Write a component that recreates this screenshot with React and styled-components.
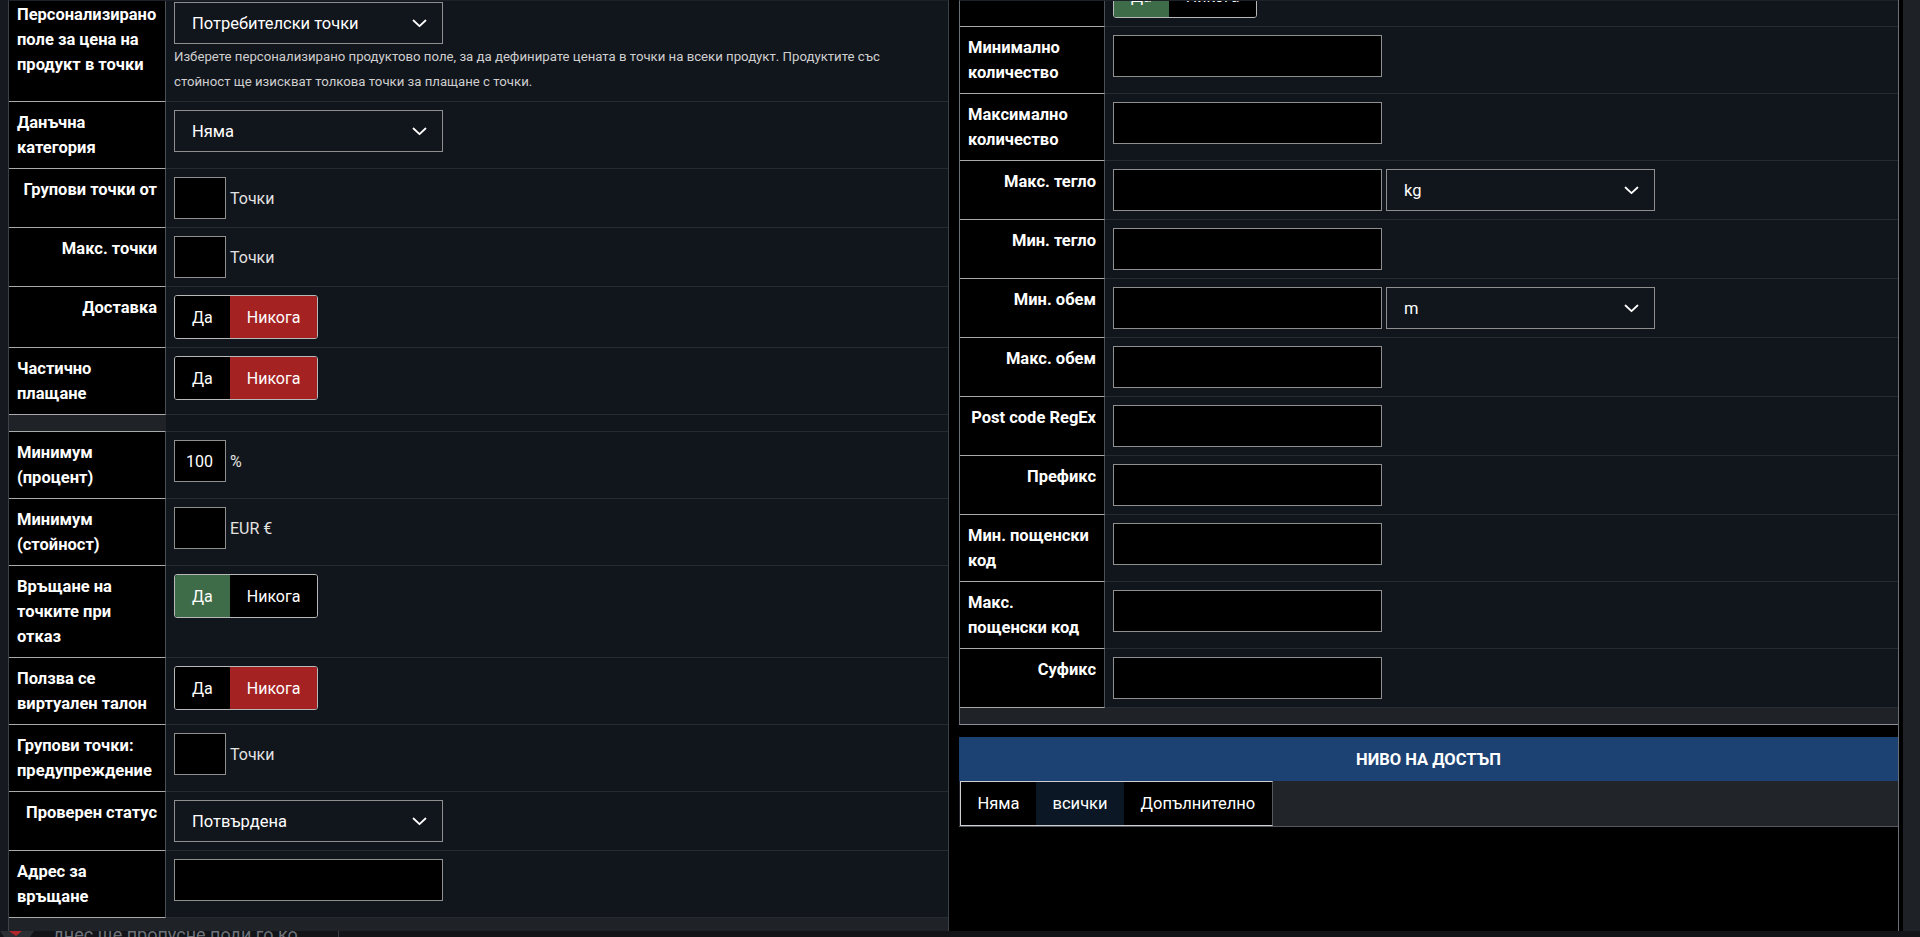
import React from "react";
import styled, { createGlobalStyle } from "styled-components";

const GlobalStyle = createGlobalStyle`
  html, body { margin: 0; padding: 0; background: #000; }
  body {
    font-family: Roboto, "Noto Sans", "Liberation Sans", sans-serif;
    color: #fff;
    overflow: hidden;
  }
  * { box-sizing: border-box; }
`;

const Page = styled.div`
  width: 1920px;
  height: 937px;
  display: flex;
  flex-direction: column;
  background: #000;
  overflow: hidden;
`;

const Workspace = styled.div`
  display: flex;
  height: 931px;
  flex-shrink: 0;
`;

const EdgeStrip = styled.div`
  width: 8px;
  flex-shrink: 0;
  background: #16191f;
`;

const LeftColumn = styled.div`
  width: 941px;
  flex-shrink: 0;
  border-left: 1px solid #3d4149;
  border-right: 1px solid #3d4149;
  border-top: 1px solid #1d2129;
  background: #1f2328;
  overflow: hidden;
`;

const RightColumn = styled.div`
  width: 940px;
  flex-shrink: 0;
  margin-left: 10px;
  display: flex;
  flex-direction: column;
  border-right: 1px solid #6a6e75;
`;

const FormBox = styled.div`
  border-left: 1px solid #6a6e75;
  border-top: 1px solid #1d2129;
  border-bottom: 1px solid #8a8e95;
  background: #1f2328;
  padding-bottom: 16px;
  overflow: hidden;
`;

const Scrollbar = styled.div`
  width: 17px;
  margin-left: 4px;
  flex-shrink: 0;
  background: #1e2125;
`;

const Row = styled.div`
  display: grid;
  grid-template-columns: ${(p) => p.$labelWidth}px 1fr;
  ${(p) =>
    p.$fixedHeight
      ? `height: ${p.$fixedHeight}px; grid-template-rows: ${p.$fixedHeight}px; overflow: hidden;`
      : ""}
`;

const Label = styled.div`
  background: ${(p) => (p.$blank ? "transparent" : "#000")};
  color: #fff;
  font-weight: 700;
  font-size: 16.5px;
  line-height: 25px;
  padding: ${(p) => (p.$tight ? "1px 8px 8px" : "8px")};
  text-align: ${(p) => p.$align || "left"};
  border-right: 1px solid ${(p) => (p.$blank ? "transparent" : "#4b4f57")};
  border-bottom: 1px solid #a9a9a9;
  min-height: ${(p) => (p.$spacer ? "17px" : "0")};
`;

const Field = styled.div`
  background: #11151c;
  padding: ${(p) => (p.$tight ? "1px 8px 7px" : "8px")};
  border-bottom: 1px solid #262a31;
  display: flex;
  flex-direction: column;
  justify-content: ${(p) => (p.$bottom ? "flex-end" : "flex-start")};
  align-items: flex-start;
  min-width: 0;
  min-height: 0;
`;

const Inline = styled.div`
  display: flex;
  align-items: center;
  gap: 4px;
`;

const TextInput = styled.input`
  width: ${(p) => (p.$small ? "52px" : "269px")};
  height: 42px;
  background: #000;
  border: 1px solid #8f8f8f;
  border-radius: 0;
  color: #fff;
  font-family: inherit;
  font-size: 16px;
  padding: 0 11px;
  outline: none;
`;

const Unit = styled.span`
  font-size: 16px;
  color: #e2e2e2;
`;

const SelectBox = styled.div`
  width: 269px;
  height: 42px;
  border: 1px solid #8f8f8f;
  background: #11151c;
  display: flex;
  align-items: center;
  justify-content: space-between;
  padding: 0 15px 0 17px;
  font-size: 16.5px;
  color: #fff;
`;

const HelpText = styled.div`
  max-width: 740px;
  font-size: 13.2px;
  line-height: 25px;
  color: #cfcfcf;
`;

const Toggle = styled.div`
  display: inline-flex;
  height: 44px;
  border: 1px solid #b8b8b8;
  border-radius: 3px;
  overflow: hidden;
  flex-shrink: 0;
`;

const toneColors = { red: "#a52222", green: "#3e6b48", off: "#000" };

const ToggleOption = styled.span`
  display: flex;
  align-items: center;
  padding: 0 17px;
  font-size: 16px;
  color: #fff;
  background: ${(p) => toneColors[p.$tone]};
`;

const AccessHeader = styled.div`
  margin-top: 12px;
  height: 44px;
  background: #1c4273;
  display: flex;
  align-items: center;
  justify-content: center;
  font-weight: 700;
  font-size: 16.5px;
  text-transform: uppercase;
  color: #fff;
`;

const TabBar = styled.div`
  height: 46px;
  background: #212429;
  border-bottom: 1px solid #53575e;
  display: flex;
  align-items: flex-start;
`;

const TabGroup = styled.div`
  display: flex;
  margin-left: 1px;
  border: 1px solid #cfcfcf;
  border-right-color: #55595f;
`;

const Tab = styled.div`
  height: 43px;
  display: flex;
  align-items: center;
  padding: 0 16.5px;
  font-size: 16.5px;
  color: #fff;
  background: ${(p) => (p.$active ? "#0b1724" : "#000")};
`;

const Footer = styled.div`
  height: 6px;
  display: flex;
  align-items: flex-start;
  background: #121418;
  overflow: hidden;
`;

const FooterMark = styled.svg`
  width: 40px;
  height: 6px;
  flex-shrink: 0;
`;

const FooterText = styled.span`
  margin-left: 13px;
  font-size: 18px;
  line-height: 8px;
  color: #6d7279;
  white-space: nowrap;
`;

const FooterDivider = styled.span`
  width: 1px;
  height: 6px;
  margin-left: 40px;
  background: #3a3d43;
`;

function Chevron() {
  return (
    <svg width="15" height="9" viewBox="0 0 15 9" fill="none">
      <polyline
        points="1.5,1.5 7.5,7.2 13.5,1.5"
        stroke="#fff"
        strokeWidth="1.8"
        strokeLinecap="round"
        strokeLinejoin="round"
      />
    </svg>
  );
}

function Select({ value }) {
  return (
    <SelectBox>
      <span>{value}</span>
      <Chevron />
    </SelectBox>
  );
}

function YesNo({ on }) {
  return (
    <Toggle>
      <ToggleOption $tone={on ? "green" : "off"}>Да</ToggleOption>
      <ToggleOption $tone={on ? "off" : "red"}>Никога</ToggleOption>
    </Toggle>
  );
}

function SmallWithUnit({ value, unit }) {
  return (
    <Inline>
      <TextInput $small defaultValue={value || ""} />
      <Unit>{unit}</Unit>
    </Inline>
  );
}

function FormRow({ labelWidth, label, align, tight, children }) {
  return (
    <Row $labelWidth={labelWidth}>
      <Label $align={align} $tight={tight}>
        {label}
      </Label>
      <Field $tight={tight}>{children}</Field>
    </Row>
  );
}

const LW = 157;
const RW = 145;

function PointsPanel() {
  return (
    <LeftColumn>
      <FormRow labelWidth={LW} tight label="Персонализирано поле за цена на продукт в точки">
        <Select value="Потребителски точки" />
        <HelpText>
          Изберете персонализирано продуктово поле, за да дефинирате цената в точки на всеки
          продукт. Продуктите със стойност ще изискват толкова точки за плащане с точки.
        </HelpText>
      </FormRow>
      <FormRow labelWidth={LW} label="Данъчна категория">
        <Select value="Няма" />
      </FormRow>
      <FormRow labelWidth={LW} align="right" label="Групови точки от">
        <SmallWithUnit unit="Точки" />
      </FormRow>
      <FormRow labelWidth={LW} align="right" label="Макс. точки">
        <SmallWithUnit unit="Точки" />
      </FormRow>
      <FormRow labelWidth={LW} align="right" label="Доставка">
        <YesNo />
      </FormRow>
      <FormRow labelWidth={LW} label="Частично плащане">
        <YesNo />
      </FormRow>
      <Row $labelWidth={LW}>
        <Label $blank $spacer />
        <Field $tight />
      </Row>
      <FormRow labelWidth={LW} label="Минимум (процент)">
        <SmallWithUnit value="100" unit="%" />
      </FormRow>
      <FormRow labelWidth={LW} label="Минимум (стойност)">
        <SmallWithUnit unit="EUR €" />
      </FormRow>
      <FormRow labelWidth={LW} label="Връщане на точките при отказ">
        <YesNo on />
      </FormRow>
      <FormRow labelWidth={LW} label="Ползва се виртуален талон">
        <YesNo />
      </FormRow>
      <FormRow labelWidth={LW} label="Групови точки: предупреждение">
        <SmallWithUnit unit="Точки" />
      </FormRow>
      <FormRow labelWidth={LW} align="right" label="Проверен статус">
        <Select value="Потвърдена" />
      </FormRow>
      <FormRow labelWidth={LW} label="Адрес за връщане">
        <TextInput />
      </FormRow>
    </LeftColumn>
  );
}

function ShippingPanel() {
  return (
    <RightColumn>
      <FormBox>
        <Row $labelWidth={RW} $fixedHeight={26}>
          <Label />
          <Field $bottom>
            <YesNo on />
          </Field>
        </Row>
        <FormRow labelWidth={RW} label="Минимално количество">
          <TextInput />
        </FormRow>
        <FormRow labelWidth={RW} label="Максимално количество">
          <TextInput />
        </FormRow>
        <FormRow labelWidth={RW} align="right" label="Макс. тегло">
          <Inline>
            <TextInput />
            <Select value="kg" />
          </Inline>
        </FormRow>
        <FormRow labelWidth={RW} align="right" label="Мин. тегло">
          <TextInput />
        </FormRow>
        <FormRow labelWidth={RW} align="right" label="Мин. обем">
          <Inline>
            <TextInput />
            <Select value="m" />
          </Inline>
        </FormRow>
        <FormRow labelWidth={RW} align="right" label="Макс. обем">
          <TextInput />
        </FormRow>
        <FormRow labelWidth={RW} align="right" label="Post code RegEx">
          <TextInput />
        </FormRow>
        <FormRow labelWidth={RW} align="right" label="Префикс">
          <TextInput />
        </FormRow>
        <FormRow labelWidth={RW} label="Мин. пощенски код">
          <TextInput />
        </FormRow>
        <FormRow labelWidth={RW} label="Макс. пощенски код">
          <TextInput />
        </FormRow>
        <FormRow labelWidth={RW} align="right" label="Суфикс">
          <TextInput />
        </FormRow>
      </FormBox>
      <AccessHeader>Ниво на достъп</AccessHeader>
      <TabBar>
        <TabGroup>
          <Tab>Няма</Tab>
          <Tab $active>всички</Tab>
          <Tab>Допълнително</Tab>
        </TabGroup>
      </TabBar>
    </RightColumn>
  );
}

export default function App() {
  return (
    <>
      <GlobalStyle />
      <Page>
        <Workspace>
          <EdgeStrip />
          <PointsPanel />
          <ShippingPanel />
          <Scrollbar />
        </Workspace>
        <Footer>
          <FooterMark viewBox="0 0 40 6">
            <polygon points="0,0 34,0 30,6 4,6" fill="#2b2e33" />
            <polygon points="9,0 22,0 16,5" fill="#b0262a" />
          </FooterMark>
          <FooterText>днес ще пропусне поди го ко</FooterText>
          <FooterDivider />
        </Footer>
      </Page>
    </>
  );
}
